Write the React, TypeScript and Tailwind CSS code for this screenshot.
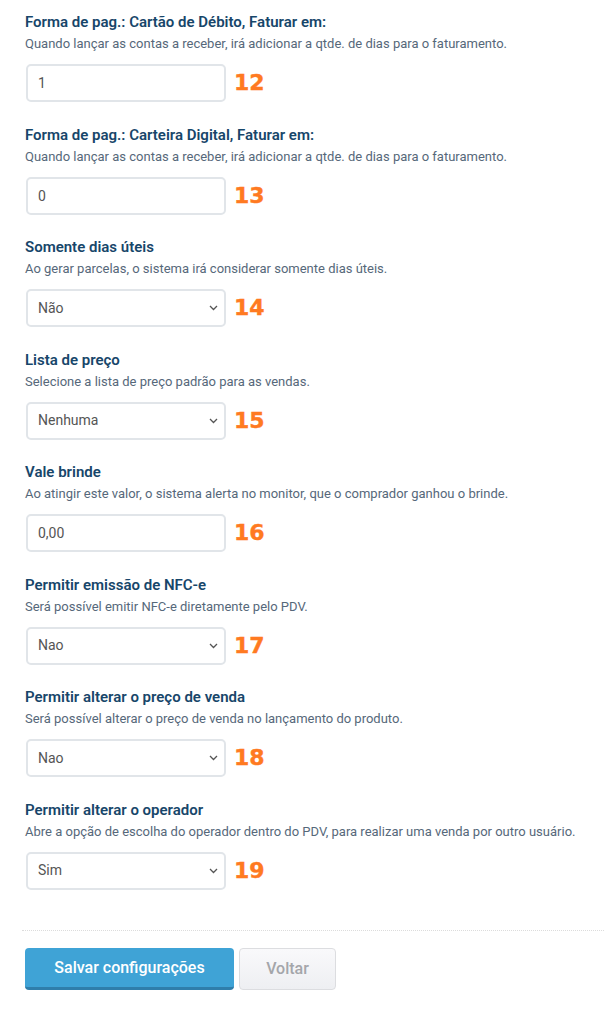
import React from "react";

type Field = {
  label: string;
  help: string;
  kind: "input" | "select";
  value: string;
  options?: string[];
  tag: string;
};

const fields: Field[] = [
  {
    label: "Forma de pag.: Cartão de Débito, Faturar em:",
    help: "Quando lançar as contas a receber, irá adicionar a qtde. de dias para o faturamento.",
    kind: "input",
    value: "1",
    tag: "12",
  },
  {
    label: "Forma de pag.: Carteira Digital, Faturar em:",
    help: "Quando lançar as contas a receber, irá adicionar a qtde. de dias para o faturamento.",
    kind: "input",
    value: "0",
    tag: "13",
  },
  {
    label: "Somente dias úteis",
    help: "Ao gerar parcelas, o sistema irá considerar somente dias úteis.",
    kind: "select",
    value: "Não",
    options: ["Não", "Sim"],
    tag: "14",
  },
  {
    label: "Lista de preço",
    help: "Selecione a lista de preço padrão para as vendas.",
    kind: "select",
    value: "Nenhuma",
    options: ["Nenhuma"],
    tag: "15",
  },
  {
    label: "Vale brinde",
    help: "Ao atingir este valor, o sistema alerta no monitor, que o comprador ganhou o brinde.",
    kind: "input",
    value: "0,00",
    tag: "16",
  },
  {
    label: "Permitir emissão de NFC-e",
    help: "Será possível emitir NFC-e diretamente pelo PDV.",
    kind: "select",
    value: "Nao",
    options: ["Nao", "Sim"],
    tag: "17",
  },
  {
    label: "Permitir alterar o preço de venda",
    help: "Será possível alterar o preço de venda no lançamento do produto.",
    kind: "select",
    value: "Nao",
    options: ["Nao", "Sim"],
    tag: "18",
  },
  {
    label: "Permitir alterar o operador",
    help: "Abre a opção de escolha do operador dentro do PDV, para realizar uma venda por outro usuário.",
    kind: "select",
    value: "Sim",
    options: ["Sim", "Nao"],
    tag: "19",
  },
];

function Chevron() {
  return (
    <svg
      className="pointer-events-none absolute right-[8px] top-1/2 -translate-y-1/2"
      width="9"
      height="6"
      viewBox="0 0 9 6"
      fill="none"
    >
      <path d="M1 1l3.5 3.5L8 1" stroke="#555" strokeWidth="1.3" />
    </svg>
  );
}

function FieldRow({ f }: { f: Field }) {
  const box =
    "h-[38px] w-[200px] rounded-[5px] border-2 border-[#e1e5e9] bg-white pl-[10px] text-[14px] text-[#555] outline-none";
  return (
    <div className="h-[112.5px] pt-[13px]">
      <div className="text-[15px] leading-[18px] font-semibold text-[#17466a]">{f.label}</div>
      <div className="mt-[5px] text-[13px] leading-[16px] text-[#56687a]">{f.help}</div>
      <div className="mt-[12px] ml-px flex items-center gap-[8px]">
        {f.kind === "input" ? (
          <input className={box} defaultValue={f.value} />
        ) : (
          <div className="relative">
            <select className={`${box} appearance-none`} defaultValue={f.value}>
              {f.options!.map((o) => (
                <option key={o}>{o}</option>
              ))}
            </select>
            <Chevron />
          </div>
        )}
        <span className="font-['DejaVu_Sans',sans-serif] text-[22px] leading-none font-bold text-[#ff7a21] [-webkit-text-stroke:0.4px_#ff7a21]">
          {f.tag}
        </span>
      </div>
    </div>
  );
}

export default function App() {
  return (
    <div className="min-h-[1010px] w-[604px] bg-white font-['Roboto',sans-serif]">
      <div className="pl-[25px]">
        {fields.map((f) => (
          <FieldRow key={f.tag} f={f} />
        ))}
      </div>

      {/* dotted divider */}
      <div className="mt-[30px] ml-[22px] border-t border-dotted border-[#dcdcdc]" />

      <div className="mt-[17px] flex gap-[5px] pl-[25px]">
        <button className="h-[42px] w-[209px] rounded-[4px] border-b-[3px] border-[#2f7eab] bg-[#3fa3d6] text-[16px] font-medium text-white">
          Salvar configurações
        </button>
        <button className="h-[42px] w-[97px] rounded-[4px] border border-[#dcdde0] bg-gradient-to-b from-[#f9f9fb] to-[#eeeff2] text-[16px] font-medium text-[#a4a6aa]">
          Voltar
        </button>
      </div>
    </div>
  );
}
